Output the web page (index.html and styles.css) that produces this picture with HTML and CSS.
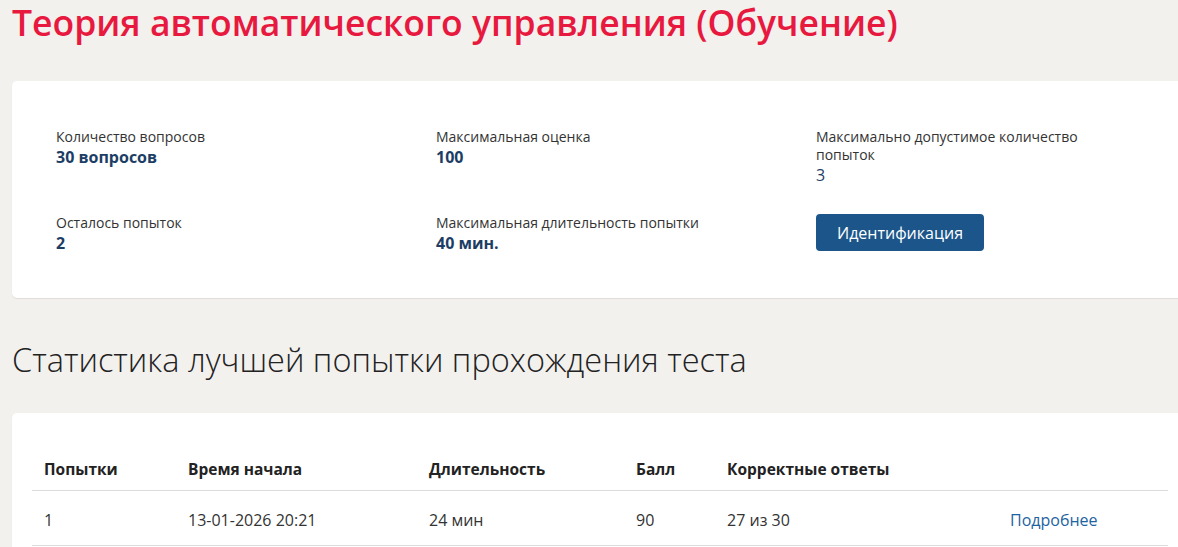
FILE: index.html
```html
<!DOCTYPE html>
<html lang="ru">
<head>
<meta charset="utf-8">
<title>Теория автоматического управления (Обучение)</title>
<link rel="stylesheet" href="styles.css">
</head>
<body>
<div class="page">
  <h1 class="title">Теория автоматического управления (Обучение)</h1>

  <section class="card info-card">
    <div class="info-grid">
      <div class="info-item">
        <div class="label">Количество вопросов</div>
        <div class="value">30 вопросов</div>
      </div>
      <div class="info-item">
        <div class="label">Максимальная оценка</div>
        <div class="value">100</div>
      </div>
      <div class="info-item">
        <div class="label">Максимально допустимое количество попыток</div>
        <div class="value value-light">3</div>
      </div>
      <div class="info-item">
        <div class="label">Осталось попыток</div>
        <div class="value">2</div>
      </div>
      <div class="info-item">
        <div class="label">Максимальная длительность попытки</div>
        <div class="value">40 мин.</div>
      </div>
      <div class="info-item">
        <button class="btn" type="button">Идентификация</button>
      </div>
    </div>
  </section>

  <h2 class="subtitle">Статистика лучшей попытки прохождения теста</h2>

  <section class="card table-card">
    <table class="stats">
      <thead>
        <tr>
          <th class="c1">Попытки</th>
          <th class="c2">Время начала</th>
          <th class="c3">Длительность</th>
          <th class="c4">Балл</th>
          <th class="c5">Корректные ответы</th>
          <th class="c6"></th>
        </tr>
      </thead>
      <tbody>
        <tr>
          <td>1</td>
          <td>13-01-2026 20:21</td>
          <td>24 мин</td>
          <td>90</td>
          <td>27 из 30</td>
          <td><a class="link" href="#">Подробнее</a></td>
        </tr>
      </tbody>
    </table>
  </section>
</div>
</body>
</html>
```

FILE: styles.css
```css
html, body {
  margin: 0;
  padding: 0;
}
body {
  background: #f3f1ee;
  font-family: "Open Sans", "Noto Sans", sans-serif;
  color: #333;
  overflow: hidden;
}
.page {
  padding-left: 12px;
  width: 1176px;
}
.title {
  margin: 0;
  font-family: "Open Sans", sans-serif;
  font-weight: 600;
  font-size: 35.5px;
  line-height: 44px;
  color: #e8193e;
}
.card {
  background: #fff;
  border-radius: 5px;
  box-shadow: 0 1px 1px rgba(120, 100, 90, 0.15);
}
.info-card {
  margin-top: 37px;
  padding: 47px 44px 45px;
}
.info-grid {
  display: grid;
  grid-template-columns: 380px 380px 290px;
  row-gap: 29px;
}
.label {
  font-size: 14px;
  line-height: 18px;
  color: #333;
}
.value {
  margin-top: 1px;
  font-size: 16px;
  line-height: 20px;
  font-weight: 700;
  color: #1c3e65;
}
.value-light {
  font-weight: 500;
}
.btn {
  display: block;
  width: 168px;
  height: 37px;
  padding: 0;
  border: 0;
  border-radius: 4px;
  background: #1b5589;
  color: #fff;
  font-family: "Open Sans", sans-serif;
  font-size: 16px;
}
.subtitle {
  margin: 40px 0 0;
  font-weight: 300;
  font-size: 32.5px;
  line-height: 44px;
  color: #222;
}
.table-card {
  margin-top: 31px;
  padding: 35px 20px 20px;
}
.stats {
  border-collapse: collapse;
  width: 1136px;
  table-layout: fixed;
}
.stats th {
  text-align: left;
  font-weight: 700;
  font-size: 15.5px;
  line-height: 26px;
  color: #222;
  padding: 8px 12px;
  border-bottom: 1px solid #dcdcdc;
}
.stats td {
  font-size: 16px;
  line-height: 26px;
  color: #333;
  padding: 16px 12px 12px;
  border-bottom: 1px solid #dcdcdc;
}
.c1 { width: 120px; }
.c2 { width: 217px; }
.c3 { width: 183px; }
.c4 { width: 67px; }
.c5 { width: 259px; }
.c6 { width: 146px; }
.link {
  color: #1d63a0;
  text-decoration: none;
}
```
